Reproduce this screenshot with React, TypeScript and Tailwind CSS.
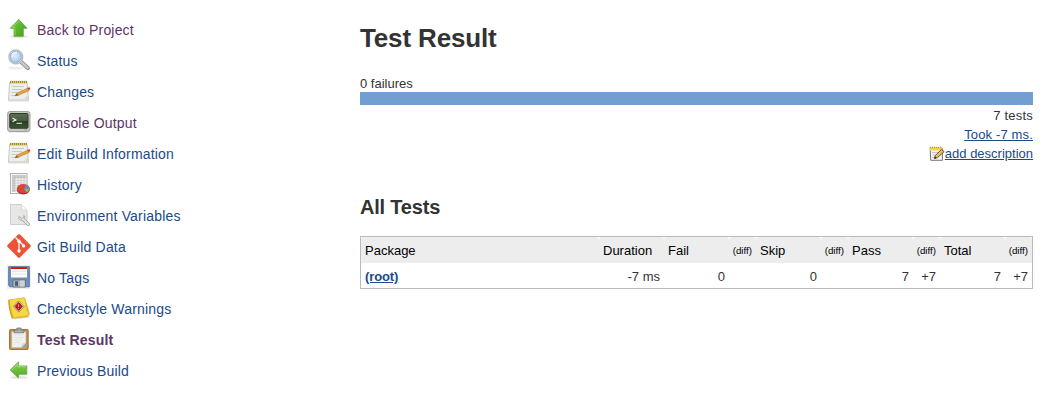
import React from "react";

type IconProps = { className?: string };

function Svg({ children }: { children: React.ReactNode }) {
  return (
    <svg viewBox="0 0 24 24" className="block h-6 w-6 shrink-0" fill="none">
      {children}
    </svg>
  );
}

function UpIcon() {
  return (
    <Svg>
      <defs>
        <linearGradient id="up" x1="0" y1="0" x2="1" y2="1">
          <stop offset="0" stopColor="#83d045" />
          <stop offset=".5" stopColor="#5db52a" />
          <stop offset="1" stopColor="#48a01a" />
        </linearGradient>
      </defs>
      <ellipse cx="12" cy="19.5" rx="9.5" ry="1.5" fill="#e4e4e4" />
      <path d="M11.7 2.5 20 11.3H16.3V19.3H7V11.3H3.3Z" fill="url(#up)" stroke="#5aa637" strokeWidth=".8" />
      <path d="M11.7 4 5.5 10.5H8V18.3" stroke="#a0dc70" strokeWidth=".7" />
    </Svg>
  );
}

function SearchIcon() {
  return (
    <Svg>
      <defs>
        <radialGradient id="lens" cx=".4" cy=".4" r=".7">
          <stop offset="0" stopColor="#e0edfb" />
          <stop offset="1" stopColor="#a3c6ee" />
        </radialGradient>
      </defs>
      <ellipse cx="9" cy="20" rx="8" ry="1.6" fill="#eee" />
      <path d="m14.5 14.3 6.4 5.8" stroke="#8b8b8b" strokeWidth="4" strokeLinecap="round" />
      <path d="m14.2 14 6.5 5.9" stroke="#c8c8c8" strokeWidth="2.4" strokeLinecap="round" />
      <circle cx="8.8" cy="8.8" r="7" fill="#eee" stroke="#b9bbbb" strokeWidth="1.2" />
      <circle cx="8.8" cy="8.8" r="5.6" fill="url(#lens)" stroke="#7b9fd0" strokeWidth=".8" />
      <path d="M5 9c0-3 2-4.5 5-4.5" stroke="#eef7ff" strokeWidth="1.3" />
    </Svg>
  );
}

function NotepadIcon() {
  return (
    <Svg>
      <path d="M1 21.5h21v1H1z" fill="#ddd" />
      <path d="M2.6 3.5h17.5l1.4 17.5h-20z" fill="#eeeeec" stroke="#bcbcb8" strokeWidth=".8" />
      <path d="M3 1.8h17v2.7H3z" fill="#d8c760" />
      <path d="M3 3h17" stroke="#9c8c3a" strokeWidth="2.2" strokeDasharray="1 1" />
      <path d="M5 7.5h12M5 10.5h10M4.5 13.5h6M4.5 16.5h8" stroke="#c4c4c1" strokeWidth=".9" />
      <path d="m8 16.8 2-2.8 11-5 1.2 2.5-11 4.7z" fill="#e7a546" stroke="#b37e35" strokeWidth=".6" />
      <path d="m20.3 9 1.4-.7c1.4-.3 2.1 1.6 1 2.3l-1.2.6z" fill="#dc4636" />
      <path d="m7.8 17 2.2-2.5 1 1.7z" fill="#725b40" />
      <path d="m15.5 21 5.5-5v5z" fill="#dadad7" />
    </Svg>
  );
}

function ConsoleIcon() {
  return (
    <Svg>
      <defs>
        <linearGradient id="screen" x1="0" y1="0" x2="0" y2="1">
          <stop offset="0" stopColor="#5b6f53" />
          <stop offset=".48" stopColor="#475b40" />
          <stop offset=".53" stopColor="#293e25" />
          <stop offset="1" stopColor="#3b5632" />
        </linearGradient>
      </defs>
      <path d="M2 22h20" stroke="#ddd" />
      <rect x=".6" y="1.5" width="22.4" height="20" rx="2.3" fill="#c5c8be" stroke="#999c94" strokeWidth=".9" />
      <rect x="2.8" y="3.5" width="18.2" height="14.7" rx="1" fill="url(#screen)" stroke="#30382d" />
      <path d="m5.5 8 3.4 1.9-3.4 1.9M9.5 13.3h5.5" stroke="#eef3e9" strokeWidth="1.1" />
      <path d="M17 20h3" stroke="#9bb583" />
    </Svg>
  );
}

function HistoryIcon() {
  return (
    <Svg>
      <rect x="3.5" y="1.5" width="16.5" height="20" fill="#f7f7f7" stroke="#a9a9a9" strokeWidth=".9" />
      <path d="M5 3h14v3H5zM5 3h3v17H5z" fill="#cfcfcf" />
      <path d="M5 6h14M5 8.5h14M5 11h14M5 13.5h14M5 16h14M5 18.5h14M8 3v17M11 3v17M14 3v17M17 3v17" stroke="#bbb" strokeWidth=".6" />
      <ellipse cx="16.3" cy="17.7" rx="6.5" ry="4.7" fill="#b22924" />
      <ellipse cx="16.3" cy="16.5" rx="6.4" ry="4.6" fill="#df433b" />
      <path d="m17 17.3 1.8-4.5c2.3.6 3.7 1.9 3.7 3.8z" fill="#5a91ca" />
      <path d="m17 17.3 5.5-.7c-.2 2.1-1.3 3.3-3.2 4z" fill="#8ab957" />
      <path d="m17 17.3 2.3 3.3-2.5.4z" fill="#8a5297" />
    </Svg>
  );
}

function EnvironmentIcon() {
  return (
    <Svg>
      <path d="M3.5 1.5h11L20 7v14.5H3.5z" fill="#e7e8e6" stroke="#cacbc9" strokeWidth=".9" />
      <path d="M14.5 1.5V7H20" fill="#f8f8f8" stroke="#d6d6d6" strokeWidth=".8" />
      <path d="m16.4 16.7 5 4.6" stroke="#a0a29f" strokeWidth="3.2" strokeLinecap="round" />
      <path d="M12 13.2c-1.2 2 .3 4.5 3.2 4 2.5-.4 3.3-3 1.7-4.9l-.2 2.6-2.2.4z" fill="#dedfdc" stroke="#a5a7a3" strokeWidth=".8" />
      <path d="m16 16.3 5.3 4.9" stroke="#e5e6e4" strokeWidth="1.9" strokeLinecap="round" />
    </Svg>
  );
}

function GitIcon() {
  return (
    <Svg>
      <path d="M11 .6c.6-.6 1.4-.6 2 0L23.4 11c.6.6.6 1.4 0 2L13 23.4c-.6.6-1.4.6-2 0L.6 13c-.6-.6-.6-1.4 0-2z" fill="#ef5337" />
      <path d="m8.5 3.5 3.7 3.7 4.3 4.3M12 7.2V17" stroke="#fff" strokeWidth="1.3" />
      <circle cx="12" cy="7.2" r="1.7" fill="#fff" />
      <circle cx="12" cy="17" r="1.7" fill="#fff" />
      <circle cx="16.6" cy="11.9" r="1.7" fill="#fff" />
    </Svg>
  );
}

function FloppyIcon() {
  return (
    <Svg>
      <path d="M0 0h24v24H0z" fill="#eeeeec" />
      <path d="M1.7 1.7h20.6v20.1H3L1.7 20.5z" fill="#6f8fbe" stroke="#526f9a" strokeWidth=".9" />
      <path d="M4 2h16v10.5H4z" fill="#fcfcfc" />
      <path d="M4 2h16v2H4z" fill="#d51818" />
      <path d="M5 6.5h14M5 9h14" stroke="#dedede" strokeWidth=".7" />
      <path d="M6 15h12.5v7H6z" fill="#b4b7b5" stroke="#5c6c7b" strokeWidth=".8" />
      <path d="M8 16.3h3v4.5H8z" fill="#485d80" />
      <path d="M13 15.5h4.5v6H13z" fill="#d0d2ce" />
    </Svg>
  );
}

function CheckstyleIcon() {
  return (
    <Svg>
      <path d="m5 22 17.5-2.2v2L8 23.5z" fill="#e4e0d0" />
      <path d="m1.5 4 16-2.3 4.8 15.5c0 2-1 3-3 3.5L5 22.2z" fill="#edc32b" stroke="#cda42e" strokeWidth=".7" />
      <path d="M2 4.2 17.3 2 19 14c.8 3 2.2 3.5 3 3.8-4 2.5-9 1.5-15 3.8z" fill="#f7d944" />
      <path d="M2 4.2c-.2 5 1 12 3.4 17.5" stroke="#c69722" strokeWidth="1.1" />
      <path d="m11.5 4.8 5.5 5.7-5.2 5.7-5.5-5.7z" fill="#ded9bf" stroke="#8d7a50" strokeWidth=".8" />
      <path d="m11.6 6.6 3.6 3.9-3.5 3.9-3.6-4z" fill="#c51c1c" stroke="#911" strokeWidth=".9" />
      <path d="M11.6 8.3v2.8M11.6 12v.8" stroke="#ff9b94" strokeWidth=".9" />
    </Svg>
  );
}

function ClipboardIcon() {
  return (
    <Svg>
      <rect x="2.5" y="2.5" width="18.7" height="20" rx="1" fill="#c18a43" stroke="#9f6c31" strokeWidth=".9" />
      <path d="M4.7 4.5h14.3v16.3H4.7z" fill="#f0f0ef" stroke="#b5b5b4" strokeWidth=".8" />
      <path d="M7 8h9M7 10.5h10M7 13h8M7 15.5h6" stroke="#dededd" strokeWidth=".8" />
      <path d="m14 20.8 5-5v5z" fill="#9b9e9c" />
      <path d="m14 20.8.8-4.2 4.2-.8z" fill="#d8dad8" />
      <path d="M7 5.8V3.3h2.2L10 1h4l.8 2.3H17v2.5z" fill="#999c98" stroke="#7d807c" strokeWidth=".8" />
      <path d="M8 4.3h8" stroke="#bcbfba" strokeWidth=".8" />
    </Svg>
  );
}

function BackIcon() {
  return (
    <Svg>
      <defs>
        <linearGradient id="back" x1="0" y1="0" x2="0" y2="1">
          <stop offset="0" stopColor="#8bd252" />
          <stop offset="1" stopColor="#50a925" />
        </linearGradient>
      </defs>
      <ellipse cx="12" cy="19.4" rx="9" ry="1.4" fill="#e2e2e2" />
      <path d="m3.2 12 8.3-8.2v4.1h8.3v8.4h-8.3V20z" fill="url(#back)" stroke="#62aa41" strokeWidth=".8" />
      <path d="m4.8 11.8 6-5.8v2.7h8.2" stroke="#b5e791" strokeWidth=".7" />
    </Svg>
  );
}

function EditIcon({ className }: IconProps) {
  return (
    <svg viewBox="0 0 16 16" className={className} fill="none">
      <path d="M1.2 2.5h12.2v11.8H1.7z" fill="#f5f5f2" stroke="#777773" />
      <path d="M.5 1h12.8v3.5H.5z" fill="#f4d84a" />
      <path d="M1 1.5h12" stroke="#c59e22" strokeDasharray="1 1" strokeWidth="1.4" />
      <path d="M3 6.5h7M3 9h5M3 11.5h3" stroke="#bbb" strokeWidth=".8" />
      <path d="m5.5 12.5.8-3 6.2-6.1L15.2 5.6l-6.7 6z" fill="#e9bd63" stroke="#50452f" strokeWidth=".9" />
      <path d="m5.2 13 .7-2.4 1.7 1.5z" fill="#272727" />
    </svg>
  );
}

const tasks = [
  { label: "Back to Project", Icon: UpIcon, visited: true },
  { label: "Status", Icon: SearchIcon },
  { label: "Changes", Icon: NotepadIcon },
  { label: "Console Output", Icon: ConsoleIcon, visited: true },
  { label: "Edit Build Information", Icon: NotepadIcon },
  { label: "History", Icon: HistoryIcon },
  { label: "Environment Variables", Icon: EnvironmentIcon },
  { label: "Git Build Data", Icon: GitIcon },
  { label: "No Tags", Icon: FloppyIcon },
  { label: "Checkstyle Warnings", Icon: CheckstyleIcon },
  { label: "Test Result", Icon: ClipboardIcon, visited: true, current: true },
  { label: "Previous Build", Icon: BackIcon },
];

const columns = [
  { label: "Package", value: "(root)" },
  { label: "Duration", value: "-7 ms" },
  { label: "Fail", value: "0" },
  { label: "(diff)", value: "" },
  { label: "Skip", value: "0" },
  { label: "(diff)", value: "" },
  { label: "Pass", value: "7" },
  { label: "(diff)", value: "+7" },
  { label: "Total", value: "7" },
  { label: "(diff)", value: "+7" },
];

const grid = "grid grid-cols-[238px_65px_65px_27px_65px_27px_65px_27px_65px_27px]";

export default function App() {
  return (
    <div className="flex h-[417px] w-[1053px] overflow-hidden bg-white font-['Liberation_Sans',sans-serif] text-[13px] leading-[19px] text-[#333]">
      <nav className="flex w-[360px] shrink-0 flex-col gap-[7px] pl-[7px] pt-[17px]">
        {tasks.map(({ label, Icon, visited, current }) => (
          <a
            key={label}
            href="#"
            className={`flex h-6 items-center gap-1.5 text-[14px] tracking-[0.18px] ${visited ? "text-[#5c3566]" : "text-[#204a87]"} ${current ? "font-bold" : ""}`}
          >
            <Icon />
            <span className="pt-0.5">{label}</span>
          </a>
        ))}
      </nav>
      <main className="w-[673px] pt-[22px]">
        <h1 className="text-[26px] font-bold leading-8 tracking-[-0.15px]">Test Result</h1>
        <div className="mt-5 h-[18px]">0 failures</div>
        <div className="h-[13px] bg-[#729fcf]" />
        <div className="flex flex-col items-end pt-[1px]">
          <span className="tracking-[0.2px]">7 tests</span>
          <a href="#" className="tracking-[0.15px] text-[#204a87] underline">Took -7 ms.</a>
          <a href="#" className="flex text-[#204a87] underline">
            <EditIcon className="mt-0.5 h-4 w-4" />
            add description
          </a>
        </div>
        <h2 className="mt-8 text-[20px] font-bold leading-6 tracking-[-0.2px]">All Tests</h2>
        <div className="mt-[17px] h-[53px] border border-[#bbb]">
          <div className={`${grid} h-[26px] bg-white`}>
            {columns.map(({ label }, i) => (
              <div
                key={i}
                className={`flex h-[26px] items-center rounded-t-[3px] bg-[#ededed] pt-px text-black ${label === "(diff)" ? "justify-end pr-1 text-[9.75px]" : "pl-1"}`}
              >
                {label}
              </div>
            ))}
          </div>
          <div className={`${grid} h-[25px] leading-[27px]`}>
            {columns.map(({ value }, i) => (
              <div key={i} className={i === 0 ? "pl-1" : "whitespace-nowrap pr-1 text-right"}>
                {i === 0 ? (
                  <a href="#" className="font-bold tracking-[-0.1px] text-[#204a87] underline">{value}</a>
                ) : (
                  value
                )}
              </div>
            ))}
          </div>
        </div>
      </main>
    </div>
  );
}
